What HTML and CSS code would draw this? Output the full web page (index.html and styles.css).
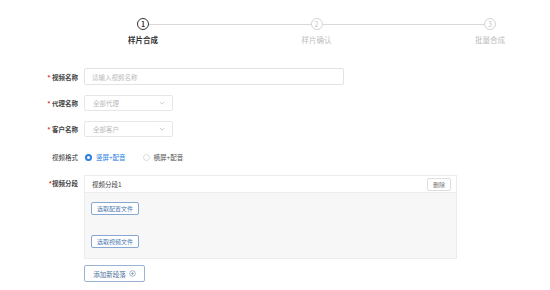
FILE: index.html
```html
<!DOCTYPE html>
<html lang="zh-CN">
  <head>
    <meta charset="UTF-8" />
    <meta name="viewport" content="width=device-width, initial-scale=1.0" />
    <title>样片合成</title>
    <link rel="stylesheet" href="styles.css">
  </head>
  <body>
    <div class="steps">
      <div class="step active">
        <span class="step-num">1</span>
        <span class="step-title">样片合成</span>
      </div>
      <div class="step-line"></div>
      <div class="step">
        <span class="step-num">2</span>
        <span class="step-title">样片确认</span>
      </div>
      <div class="step-line"></div>
      <div class="step">
        <span class="step-num">3</span>
        <span class="step-title">批量合成</span>
      </div>
    </div>

    <form class="form">
      <div class="form-row row-name">
        <label class="form-label"><i class="star">*</i> 视频名称</label>
        <input class="input" type="text" placeholder="请输入视频名称" />
      </div>
      <div class="form-row row-agent">
        <label class="form-label"><i class="star">*</i> 代理名称</label>
        <div class="select">
          <span>全部代理</span>
          <svg class="chevron" viewBox="0 0 8 5"><path d="M1 1l3 3 3-3" /></svg>
        </div>
      </div>
      <div class="form-row row-client">
        <label class="form-label"><i class="star">*</i> 客户名称</label>
        <div class="select">
          <span>全部客户</span>
          <svg class="chevron" viewBox="0 0 8 5"><path d="M1 1l3 3 3-3" /></svg>
        </div>
      </div>
      <div class="form-row row-format">
        <label class="form-label">视频格式</label>
        <div class="radios">
          <span class="radio checked"><i class="dot"></i>竖屏+配音</span>
          <span class="radio"><i class="dot"></i>横屏+配音</span>
        </div>
      </div>
      <div class="form-row row-segment">
        <label class="form-label"><i class="star">*</i>视频分段</label>
        <div class="segment">
          <div class="segment-head">
            <span>视频分段1</span>
            <button type="button" class="del-btn">删除</button>
          </div>
          <div class="segment-body">
            <button type="button" class="file-btn">选取配置文件</button>
            <button type="button" class="file-btn">选取视频文件</button>
          </div>
        </div>
      </div>
      <div class="form-row">
        <span class="form-label"></span>
        <button type="button" class="add-btn">
          添加新段落
          <svg class="plus" viewBox="0 0 10 10"><circle cx="5" cy="5" r="4" /><path d="M5 3v4M3 5h4" /></svg>
        </button>
      </div>
    </form>
  </body>
</html>
```

FILE: styles.css
```css
body {
  font-family: "Noto Sans CJK SC", "Noto Sans", sans-serif;
  margin: 0;
  background: white;
  color: #333;
  font-size: 7px;
}
.steps {
  display: flex;
  align-items: flex-start;
  padding: 18px 0 0 137px;
  width: 359px;
  height: 32px;
}
.step {
  width: 12px;
  display: flex;
  flex-direction: column;
  align-items: center;
}
.step-num {
  box-sizing: border-box;
  width: 12px;
  height: 12px;
  border: 1px solid #d4d4d4;
  border-radius: 50%;
  color: #c4c4c4;
  font-size: 7px;
  line-height: 10px;
  text-align: center;
}
.step-title {
  white-space: nowrap;
  margin-top: 4px;
  font-size: 7.5px;
  color: #bdbdbd;
}
.active .step-num {
  border-color: #333;
  color: #333;
  font-weight: bold;
}
.active .step-title {
  color: #333;
  font-weight: bold;
}
.step-line {
  flex: 1;
  height: 1px;
  margin-top: 6px;
  background: #d9d9d9;
}
.form {
  margin-top: 18px;
}
.form-row {
  display: flex;
  align-items: center;
}
.form-label {
  width: 78px;
  flex-shrink: 0;
  margin-right: 6px;
  text-align: right;
  font-weight: bold;
  color: #444;
  font-size: 6.5px;
}
.star {
  font-style: normal;
  color: #e4393c;
}
.row-name {
  margin-bottom: 10px;
}
.row-agent {
  margin-bottom: 10px;
}
.row-client {
  margin-bottom: 13px;
}
.row-format {
  height: 14px;
  margin-bottom: 11px;
}
.row-format .form-label {
  font-weight: normal;
  color: #333;
}
.row-segment {
  align-items: flex-start;
  margin-bottom: 6px;
}
.row-segment .form-label {
  line-height: 17px;
}
.input {
  box-sizing: border-box;
  width: 260px;
  height: 17px;
  padding: 0 7px;
  border: 1px solid #e3e3e3;
  border-radius: 2px;
  font-family: inherit;
  font-size: 6.5px;
  outline: none;
}
.input::placeholder {
  color: #bbb;
}
.select {
  box-sizing: border-box;
  width: 89px;
  height: 16px;
  padding: 0 7px 0 8px;
  border: 1px solid #e6e6e6;
  border-radius: 2px;
  display: flex;
  align-items: center;
  justify-content: space-between;
  color: #bbb;
  font-size: 6.5px;
}
.chevron {
  width: 6px;
  height: 4px;
  fill: none;
  stroke: #bbb;
  stroke-width: 1;
}
.radios {
  display: flex;
  gap: 17px;
  padding-left: 1px;
}
.radio {
  display: flex;
  align-items: center;
  gap: 4px;
  color: #555;
  font-size: 6.5px;
}
.dot {
  box-sizing: border-box;
  width: 7px;
  height: 7px;
  border: 1px solid #dcdcdc;
  border-radius: 50%;
}
.radio.checked {
  color: #2d7fe0;
}
.radio.checked .dot {
  border: 2px solid #2d7fe0;
  background: white;
}
.segment {
  box-sizing: border-box;
  width: 373px;
  border: 1px solid #ececec;
}
.segment-head {
  box-sizing: border-box;
  height: 17px;
  padding: 0 5px 0 7px;
  display: flex;
  align-items: center;
  justify-content: space-between;
  border-bottom: 1px solid #ececec;
  font-size: 6.5px;
  color: #444;
}
.del-btn {
  width: 24px;
  height: 13px;
  padding: 0;
  background: white;
  border: 1px solid #dedede;
  border-radius: 2px;
  font-family: inherit;
  font-size: 6px;
  color: #777;
}
.segment-body {
  height: 65px;
  background: #f7f7f7;
  padding: 9px 0 0 6px;
  box-sizing: border-box;
  display: flex;
  flex-direction: column;
  align-items: flex-start;
  gap: 20px;
}
.file-btn {
  width: 48px;
  height: 13px;
  padding: 0;
  background: white;
  border: 1px solid #86a7cf;
  border-radius: 2px;
  font-family: inherit;
  font-size: 6px;
  color: #4a77ad;
}
.add-btn {
  width: 61px;
  height: 17px;
  padding: 0;
  background: white;
  border: 1px solid #98b3d4;
  border-radius: 2px;
  display: flex;
  align-items: center;
  justify-content: center;
  gap: 3px;
  font-family: inherit;
  font-size: 6.5px;
  color: #4b6f99;
}
.plus {
  width: 7px;
  height: 7px;
  fill: none;
  stroke: #6b8ab0;
  stroke-width: 0.9;
}
```
